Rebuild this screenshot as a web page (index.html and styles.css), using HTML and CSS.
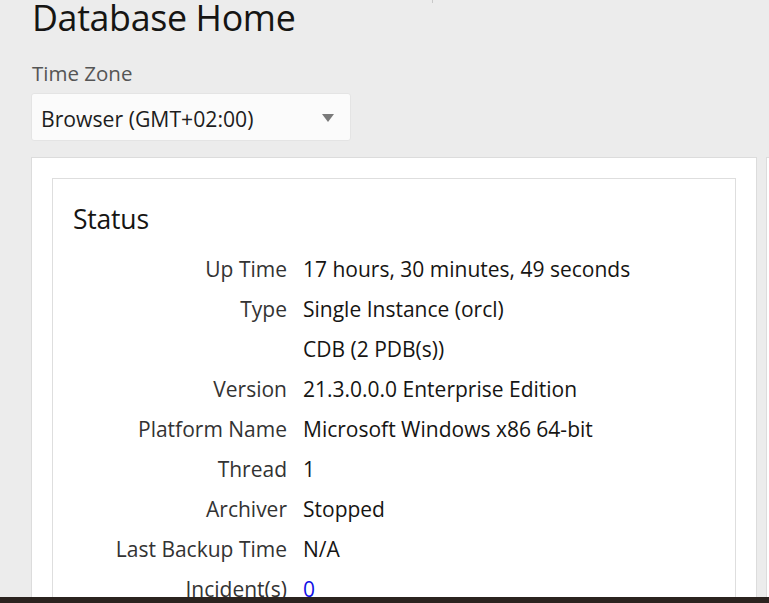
FILE: index.html
```html
<!DOCTYPE html>
<html>
<head>
<meta charset="utf-8">
<link rel="stylesheet" href="styles.css">
</head>
<body>
<div class="page">
  <span class="tick"></span>
  <h1 class="title">Database Home</h1>
  <div class="tz">
    <label class="tz-label">Time Zone</label>
    <div class="select">
      <span>Browser (GMT+02:00)</span>
      <svg class="arrow" width="12" height="9" viewBox="0 0 12 9"><path d="M0 0H12L6 8Z" fill="#7a7a7a"/></svg>
    </div>
  </div>
  <div class="cards">
    <div class="card">
      <div class="panel">
        <h2 class="panel-title">Status</h2>
        <dl class="props">
          <dt>Up Time</dt><dd>17 hours, 30 minutes, 49 seconds</dd>
          <dt>Type</dt><dd>Single Instance (orcl)</dd>
          <dt></dt><dd>CDB (2 PDB(s))</dd>
          <dt>Version</dt><dd>21.3.0.0.0 Enterprise Edition</dd>
          <dt>Platform Name</dt><dd>Microsoft Windows x86 64-bit</dd>
          <dt>Thread</dt><dd>1</dd>
          <dt>Archiver</dt><dd>Stopped</dd>
          <dt>Last Backup Time</dt><dd>N/A</dd>
          <dt>Incident(s)</dt><dd><a class="link" href="#">0</a></dd>
        </dl>
      </div>
    </div>
    <div class="card-next"></div>
  </div>
</div>
<div class="taskbar"></div>
</body>
</html>
```
FILE: styles.css
```css
html, body {
  margin: 0;
  padding: 0;
  height: 100%;
  overflow: hidden;
}
body {
  background: #ececec;
  font-family: "Open Sans", "Noto Sans", sans-serif;
  color: #161513;
  position: relative;
}
.page {
  padding: 0 0 0 31px;
  position: relative;
}
.tick {
  position: absolute;
  left: 432px;
  top: 0;
  width: 1px;
  height: 3px;
  background: #c8c8c8;
}
.title {
  margin: 0;
  font-weight: 400;
  font-size: 35.8px;
  line-height: 34px;
  padding-left: 1px;
  letter-spacing: -0.35px;
}
.tz {
  margin-top: 26px;
}
.tz-label {
  display: block;
  font-size: 20.5px;
  line-height: 26px;
  color: #555;
  padding-left: 1px;
}
.select {
  margin-top: 7px;
  width: 320px;
  height: 48px;
  box-sizing: border-box;
  background: #fbfbfb;
  border: 1px solid #e4e4e4;
  border-radius: 3px;
  display: flex;
  align-items: center;
  justify-content: space-between;
  padding: 2px 16px 0 9px;
  font-size: 21.2px;
  color: #1d1d1d;
}
.arrow {
  display: block;
}
.cards {
  margin-top: 16px;
  display: flex;
  gap: 9px;
  overflow: hidden;
}
.card {
  background: #fff;
  border: 1px solid #dcdcdc;
  border-bottom: none;
  width: 726px;
  height: 460px;
  box-sizing: border-box;
  padding: 20px 20px 0 20px;
  flex: none;
}
.card-next {
  flex: 1;
  min-width: 0;
  background: #fff;
  border: 1px solid #dcdcdc;
  border-right: none;
  border-bottom: none;
  height: 460px;
  box-sizing: border-box;
}
.panel {
  border: 1px solid #dedede;
  border-bottom: none;
  height: 100%;
  box-sizing: border-box;
  padding: 23px 20px 0 20px;
}
.panel-title {
  margin: 0;
  font-weight: 400;
  font-size: 26.5px;
  line-height: 34px;
  letter-spacing: -0.2px;
}
.props {
  margin: 13px 0 0 0;
  display: grid;
  grid-template-columns: 214px 1fr;
  column-gap: 16px;
  row-gap: 0;
  font-size: 21px;
  line-height: 40px;
}
.props dt {
  text-align: right;
  color: #333;
}
.props dd {
  margin: 0;
  color: #161513;
}
.link {
  color: #1010e6;
  text-decoration: none;
}
.taskbar {
  position: absolute;
  left: 0;
  right: 0;
  bottom: 0;
  height: 6px;
  background: #2b231f;
}
```
